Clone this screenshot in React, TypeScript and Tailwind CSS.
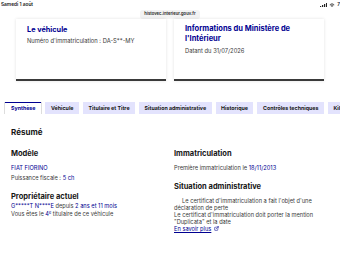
import { ExternalLink } from "lucide-react";

const tabs = [
  "Synthèse",
  "Véhicule",
  "Titulaire et Titre",
  "Situation administrative",
  "Historique",
  "Contrôles techniques",
  "Kilométrage",
];

export default function App() {
  return (
    <div className="w-[340px] h-[255px] overflow-hidden bg-white font-['Inter',sans-serif] text-[#161616]">
      {/* Status bar */}
      <div className="flex items-center justify-between h-[10px] pl-[1px]">
        <span className="text-[4.8px] font-semibold">Samedi 1 août</span>
        <div className="flex items-center gap-[2px]">
          <svg width="7" height="4" viewBox="0 0 7 4">
            <rect x="0" y="3" width="1.2" height="1" fill="#222" />
            <rect x="2" y="2" width="1.2" height="2" fill="#222" />
            <rect x="4" y="1" width="1.2" height="3" fill="#222" />
            <rect x="6" y="0" width="1" height="4" fill="#222" />
          </svg>
          <svg width="6" height="4" viewBox="0 0 12 9">
            <path d="M6 9 L8 6.6 A3 3 0 0 0 4 6.6 Z" fill="#222" />
            <path d="M1 4 A7 7 0 0 1 11 4" stroke="#222" strokeWidth="1.6" fill="none" />
            <path d="M2.8 5.8 A4.5 4.5 0 0 1 9.2 5.8" stroke="#222" strokeWidth="1.6" fill="none" />
          </svg>
          <span className="text-[4.8px] font-semibold">7</span>
        </div>
      </div>

      {/* URL pill */}
      <div className="flex justify-center h-[9px]">
        <span className="bg-[#f3f3f3] rounded-[3px] px-[4px] text-[4.2px] leading-[8px] font-semibold text-[#222]">
          histovec.interieur.gouv.fr
        </span>
      </div>

      {/* Cards */}
      <div className="flex gap-[8px] px-[16px]">
        <div className="w-[150px] h-[62px] bg-white shadow-[0_0_3px_rgba(0,0,0,0.12)] border-b-2 border-[#3a3a3a] px-[11px] pt-[6px]">
          <div className="text-[7.3px] leading-[10px] font-bold text-[#000091]">Le véhicule</div>
          <div className="mt-[2px] text-[5.8px] leading-[8px] text-[#3a3a3a]">
            Numéro d'immatriculation : DA-S**-MY
          </div>
        </div>
        <div className="w-[150px] h-[62px] bg-white shadow-[0_0_3px_rgba(0,0,0,0.12)] border-b-2 border-[#3a3a3a] px-[11px] pt-[5px]">
          <div className="text-[7.5px] leading-[10px] font-bold text-[#000091]">
            Informations du Ministère de
            <br />
            l'Intérieur
          </div>
          <div className="mt-[3px] text-[5.8px] leading-[8px] text-[#3a3a3a]">Datant du 31/07/2026</div>
        </div>
      </div>

      {/* Tabs */}
      <div className="mt-[21px] flex gap-[4px] pl-[5px] whitespace-nowrap overflow-hidden">
        {tabs.map((t, i) => (
          <div
            key={t}
            className={
              i === 0
                ? "shrink-0 h-[12px] px-[6px] bg-white border-t-[1.5px] border-[#000091] text-[5.3px] leading-[10px] font-bold text-[#000091] shadow-[1px_0_0_#ddd,-1px_0_0_#ddd]"
                : "shrink-0 h-[12px] px-[5.5px] bg-[#e3e3fd] text-[5.3px] leading-[12px] font-bold text-[#161616]"
            }
          >
            {t}
          </div>
        ))}
      </div>

      {/* Panel */}
      <div className="pl-[11px] pt-[13px]">
        <div className="text-[8px] leading-[11px] font-bold">Résumé</div>
        <div className="mt-[11px] grid grid-cols-[163px_1fr]">
          <div>
            <div className="text-[7.5px] leading-[10px] font-bold">Modèle</div>
            <div className="mt-[5px] text-[5.7px] leading-[8px] text-[#000091]">FIAT FIORINO</div>
            <div className="mt-[2px] text-[5.7px] leading-[8px] text-[#3a3a3a]">
              Puissance fiscale : <span className="text-[#000091]">5 ch</span>
            </div>
            <div className="mt-[10px] text-[7.5px] leading-[10px] font-bold">Propriétaire actuel</div>
            <div className="text-[5.7px] leading-[7.5px] text-[#3a3a3a]">
              <span className="text-[#000091]">G*****T N****E</span> depuis{" "}
              <span className="text-[#000091]">2 ans et 11 mois</span>
            </div>
            <div className="text-[5.7px] leading-[7.5px] text-[#3a3a3a]">
              Vous êtes le <span className="text-[#000091]">4<sup className="text-[3.8px]">e</sup></span> titulaire de ce véhicule
            </div>
          </div>
          <div>
            <div className="text-[7.5px] leading-[10px] font-bold">Immatriculation</div>
            <div className="mt-[5px] text-[5.7px] leading-[8px] text-[#3a3a3a]">
              Première immatriculation le <span className="text-[#000091]">18/11/2013</span>
            </div>
            <div className="mt-[10px] text-[7.5px] leading-[10px] font-bold">Situation administrative</div>
            <div className="mt-[5px] w-[160px] text-[5.7px] leading-[7px] text-[#3a3a3a]">
              <div className="pl-[8px]">Le certificat d'immatriculation a fait l'objet d'une</div>
              <div>déclaration de perte</div>
              <div>Le certificat d'immatriculation doit porter la mention</div>
              <div>"Duplicata" et la date</div>
              <div className="flex items-center gap-[3px] text-[#000091]">
                <span className="underline">En savoir plus</span>
                <ExternalLink size={5} strokeWidth={2.5} />
              </div>
            </div>
          </div>
        </div>
      </div>
    </div>
  );
}
